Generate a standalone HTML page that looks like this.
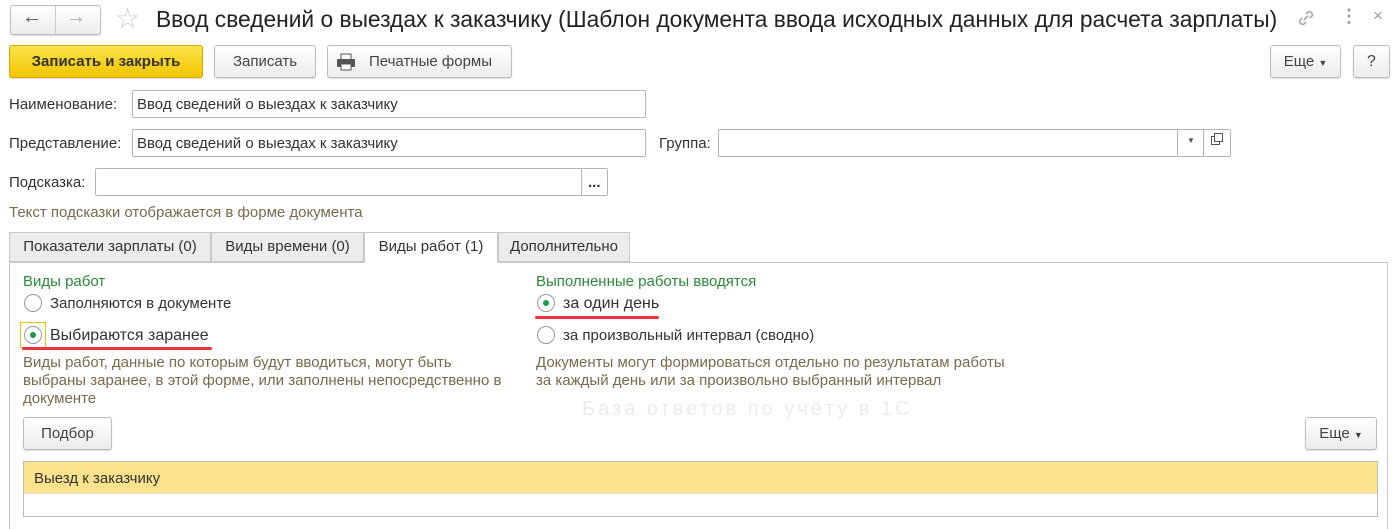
<!DOCTYPE html>
<html><head><meta charset="utf-8"><style>
*{box-sizing:border-box}
body{margin:0;width:1395px;height:529px;background:#fff;font-family:"Liberation Sans",sans-serif;font-size:15px;color:#333;position:relative;overflow:hidden}
.a{position:absolute;white-space:nowrap}
.btn{position:absolute;border:1px solid #bdbdbd;border-radius:3px;background:linear-gradient(#fff,#ececec);box-shadow:0 1px 1px rgba(0,0,0,.15);text-align:center;color:#444;font-size:15px}
.inp{position:absolute;border:1px solid #b5b5b5;border-radius:2px;background:#fff;padding-left:4px;font-size:15px;color:#333}
.c{transform-origin:0 0;display:inline-block}
.radio{position:absolute;width:18px;height:18px;border:1px solid #999;border-radius:50%;background:#fff}
.radio.on:after{content:"";position:absolute;left:5px;top:5px;width:6px;height:6px;border-radius:50%;background:#1a9a4a}
.green{color:#2a8a3a}
.gray{color:#7a6a4a}
.tab{position:absolute;top:232px;height:30px;border:1px solid #c8c8c8;background:#ececec;line-height:28px;text-align:center;font-size:15px;color:#333}
</style></head><body>
<div class="btn" style="left:10px;top:5px;width:91px;height:30px"></div>
<div class="a" style="left:55px;top:6px;width:1px;height:28px;background:#ccc"></div>
<div class="a" style="left:22px;top:6px;font-size:20px;color:#555">&#8592;</div>
<div class="a" style="left:66px;top:6px;font-size:20px;color:#aaa">&#8594;</div>
<div class="a" style="left:115px;top:2px;font-size:28px;color:#ccc">&#9734;</div>
<div class="a" style="left:156px;top:6px;font-size:23px;color:#222"><span class="c" style="transform:scaleX(.99)">Ввод сведений о выездах к заказчику (Шаблон документа ввода исходных данных для расчета зарплаты)</span></div>
<svg class="a" style="left:1296px;top:8px" width="20" height="20" viewBox="0 0 20 20" fill="none" stroke="#aaa" stroke-width="1.6"><path d="M8 12l4-4M6 10l-2 2a3 3 0 004 4l2-2M14 10l2-2a3 3 0 00-4-4l-2 2"/></svg>
<div class="a" style="left:1340px;top:6px;font-size:18px;color:#999;font-weight:bold">&#8942;</div>
<div class="a" style="left:1373px;top:6px;font-size:17px;color:#999">×</div>

<div class="btn" style="left:9px;top:45px;width:194px;height:33px;background:linear-gradient(#fbe34a,#f2c500);border-color:#d4a900;font-weight:bold;color:#333;line-height:31px">Записать и закрыть</div>
<div class="btn" style="left:214px;top:45px;width:102px;height:33px;line-height:31px">Записать</div>
<div class="btn" style="left:327px;top:45px;width:185px;height:33px;line-height:31px;padding-left:22px">Печатные формы</div>
<svg class="a" style="left:336px;top:52px" width="20" height="20" viewBox="0 0 20 20"><rect x="5" y="2" width="10" height="6" fill="#fff" stroke="#555"/><rect x="1" y="7" width="18" height="8" rx="1" fill="#555"/><rect x="5" y="12" width="10" height="6" fill="#fff" stroke="#555"/></svg>
<div class="btn" style="left:1270px;top:45px;width:71px;height:33px;line-height:31px">Еще <span style="font-size:9px">▼</span></div>
<div class="btn" style="left:1353px;top:45px;width:37px;height:33px;line-height:31px;font-size:16px">?</div>

<div class="a" style="left:9px;top:96px">Наименование:</div>
<div class="inp" style="left:132px;top:90px;width:514px;height:28px;line-height:27px">Ввод сведений о выездах к заказчику</div>
<div class="a" style="left:9px;top:135px">Представление:</div>
<div class="inp" style="left:132px;top:129px;width:514px;height:28px;line-height:27px">Ввод сведений о выездах к заказчику</div>
<div class="a" style="left:659px;top:135px">Группа:</div>
<div class="inp" style="left:718px;top:129px;width:513px;height:28px"></div>
<div class="a" style="left:1177px;top:130px;width:1px;height:26px;background:#b5b5b5"></div>
<div class="a" style="left:1203px;top:130px;width:1px;height:26px;background:#b5b5b5"></div>
<div class="a" style="left:1187px;top:136px;font-size:8px;color:#555">▼</div>
<div class="a" style="left:1211px;top:136px;width:9px;height:9px;border:1px solid #555"></div>
<div class="a" style="left:1214px;top:133px;width:9px;height:9px;border:1px solid #555;background:#fff"></div>
<div class="a" style="left:9px;top:174px">Подсказка:</div>
<div class="inp" style="left:95px;top:168px;width:513px;height:28px"></div>
<div class="a" style="left:581px;top:169px;width:1px;height:26px;background:#b5b5b5"></div>
<div class="a" style="left:588px;top:174px;font-weight:bold">...</div>
<div class="a gray" style="left:9px;top:204px">Текст подсказки отображается в форме документа</div>

<div class="a" style="left:9px;top:262px;width:1379px;height:267px;border:1px solid #c8c8c8;border-bottom:none"></div>
<div class="tab" style="left:9px;width:202px">Показатели зарплаты (0)</div>
<div class="tab" style="left:211px;width:153px">Виды времени (0)</div>
<div class="tab" style="left:364px;background:#fff;border-bottom-color:#fff;height:31px;width:134px">Виды работ (1)</div>
<div class="tab" style="left:498px;width:132px">Дополнительно</div>

<div class="a green" style="left:23px;top:273px">Виды работ</div>
<div class="radio" style="left:24px;top:294px"></div>
<div class="a" style="left:50px;top:295px">Заполняются в документе</div>
<div class="a" style="left:20px;top:322px;width:26px;height:26px;border:1px solid #f0c000"></div>
<div class="radio on" style="left:24px;top:326px"></div>
<div class="a" style="left:50px;top:327px;font-size:16px">Выбираются заранее</div>
<div class="a" style="left:22px;top:347px;width:190px;height:3px;background:#f0303a;border-radius:2px"></div>
<div class="a gray" style="left:23px;top:354px;line-height:18px;white-space:normal;width:485px">Виды работ, данные по которым будут вводиться, могут быть выбраны заранее, в этой форме, или заполнены непосредственно в документе</div>

<div class="a green" style="left:536px;top:273px">Выполненные работы вводятся</div>
<div class="radio on" style="left:537px;top:294px"></div>
<div class="a" style="left:563px;top:295px;font-size:16px">за один день</div>
<div class="a" style="left:535px;top:316px;width:124px;height:3px;background:#f0303a;border-radius:2px"></div>
<div class="radio" style="left:537px;top:326px"></div>
<div class="a" style="left:563px;top:327px">за произвольный интервал (сводно)</div>
<div class="a gray" style="left:536px;top:354px;line-height:18px">Документы могут формироваться отдельно по результатам работы<br>за каждый день или за произвольно выбранный интервал</div>
<div class="a" style="left:582px;top:398px;font-size:20px;color:#ececec;letter-spacing:3px">База ответов по учёту в 1С</div>

<div class="btn" style="left:23px;top:417px;width:89px;height:33px;line-height:31px">Подбор</div>
<div class="btn" style="left:1305px;top:417px;width:72px;height:33px;line-height:31px">Еще <span style="font-size:9px">▼</span></div>
<div class="a" style="left:23px;top:461px;width:1355px;height:56px;border:1px solid #bbb"></div>
<div class="a" style="left:24px;top:462px;width:1353px;height:32px;background:#fbe38e;border-bottom:1px solid #e0e0e0;line-height:33px;padding-left:10px">Выезд к заказчику</div>
</body></html>
